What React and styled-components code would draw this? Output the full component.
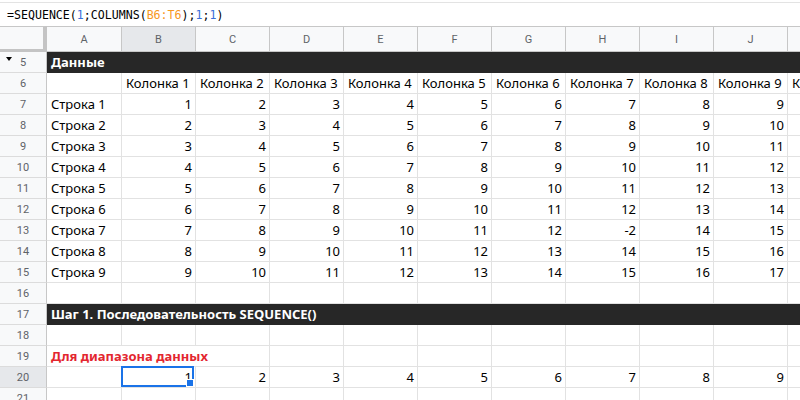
import React from 'react';
import styled, { createGlobalStyle } from 'styled-components';

const GlobalStyle = createGlobalStyle`
  html, body { margin: 0; padding: 0; background: #fff; overflow: hidden; }
  body { font-family: "Noto Sans", "Open Sans", sans-serif; }
`;

const Page = styled.div`
  width: 800px;
  height: 400px;
  overflow: hidden;
`;

const FormulaBar = styled.div`
  height: 26px;
  box-sizing: border-box;
  padding-top: 2px;
`;

const FormulaInput = styled.div`
  height: 24px;
  box-sizing: border-box;
  border-top: 1px solid #e3e3e3;
  display: flex;
  align-items: center;
  padding: 1px 0 0 7px;
  font-family: "DejaVu Sans Mono", "Liberation Mono", monospace;
  font-size: 11.6px;
  color: #000;
  white-space: pre;
`;

const Tok = styled.span`
  color: ${p => p.$c || '#000'};
`;

const Grid = styled.div`
  display: grid;
  grid-template-columns: 47px 75px repeat(10, 74px);
  grid-template-rows: 26px;
  grid-auto-rows: 21px;
  width: max-content;
`;

const Corner = styled.div`
  box-sizing: border-box;
  background: #f8f9fa;
  border-top: 1px solid #c7c7c7;
  border-right: 4px solid #c4c4c4;
  border-bottom: 3px solid #c4c4c4;
`;

const ColHeader = styled.div`
  box-sizing: border-box;
  background: ${p => (p.$active ? '#e6e8eb' : '#f8f9fa')};
  border-top: 1px solid #c7c7c7;
  border-right: 1px solid #c7c7c7;
  border-bottom: 1px solid #c7c7c7;
  display: flex;
  align-items: center;
  justify-content: center;
  padding-top: 1px;
  font-family: Roboto, "Noto Sans", sans-serif;
  font-size: 11px;
  color: #5f6368;
`;

const RowHeader = styled.div`
  position: relative;
  box-sizing: border-box;
  background: ${p => (p.$active ? '#e6e8eb' : '#f8f9fa')};
  border-right: 1px solid #c7c7c7;
  border-bottom: 1px solid #dcdcdc;
  display: flex;
  align-items: center;
  justify-content: center;
  font-family: Roboto, "Noto Sans", sans-serif;
  font-size: 11px;
  color: #5f6368;
`;

const Toggle = styled.svg`
  position: absolute;
  left: 6px;
  top: 5px;
`;

const Cell = styled.div`
  position: relative;
  box-sizing: border-box;
  border-right: 1px solid #e2e2e2;
  border-bottom: 1px solid #e2e2e2;
  padding: 0 3px 0 4px;
  font-size: 13px;
  line-height: 20px;
  white-space: nowrap;
  overflow: ${p => (p.$selected ? 'visible' : 'hidden')};
  text-align: ${p => p.$align || 'left'};
  color: ${p => p.$color || '#000'};
  font-weight: ${p => (p.$bold ? 700 : 400)};
  grid-column: ${p => (p.$span ? `span ${p.$span}` : 'auto')};
`;

const Band = styled.div`
  grid-column: 2 / -1;
  box-sizing: border-box;
  background: #272727;
  color: #fff;
  font-weight: 700;
  font-size: 13px;
  line-height: 21px;
  padding-left: 4px;
  white-space: nowrap;
  overflow: hidden;
`;

const Selection = styled.div`
  position: absolute;
  top: -1px;
  left: -1px;
  right: 1px;
  bottom: 0;
  border: 2px solid #1a73e8;
  pointer-events: none;
`;

const Handle = styled.div`
  position: absolute;
  right: -2px;
  bottom: -2px;
  width: 6px;
  height: 6px;
  background: #1a73e8;
  border: 1px solid #fff;
`;

const COLS = ['A', 'B', 'C', 'D', 'E', 'F', 'G', 'H', 'I', 'J', 'K'];

function numberRow(n) {
  return Array.from({ length: 10 }, (_, j) => {
    if (n === 7 && j === 6) return -2;
    return n + j;
  });
}

function Row({ num, active, toggle, children }) {
  return (
    <>
      <RowHeader $active={active}>
        {toggle && (
          <Toggle width="6" height="5" viewBox="0 0 6 5">
            <polygon points="0,0 6,0 3,4" fill="#000" />
          </Toggle>
        )}
        {num}
      </RowHeader>
      {children}
    </>
  );
}

function EmptyCells({ count = 11 }) {
  return Array.from({ length: count }, (_, i) => <Cell key={i} />);
}

export default function App() {
  const dataRows = Array.from({ length: 9 }, (_, i) => i + 1);
  return (
    <Page>
      <GlobalStyle />
      <FormulaBar>
        <FormulaInput>
          <Tok>=SEQUENCE(</Tok>
          <Tok $c="#3a6fd8">1</Tok>
          <Tok>;COLUMNS(</Tok>
          <Tok $c="#f7981d">B6:T6</Tok>
          <Tok>);</Tok>
          <Tok $c="#3a6fd8">1</Tok>
          <Tok>;</Tok>
          <Tok $c="#3a6fd8">1</Tok>
          <Tok>)</Tok>
        </FormulaInput>
      </FormulaBar>
      <Grid>
        <Corner />
        {COLS.map(c => (
          <ColHeader key={c} $active={c === 'B'}>{c}</ColHeader>
        ))}

        <Row num={5} toggle>
          <Band>Данные</Band>
        </Row>

        <Row num={6}>
          <Cell />
          {Array.from({ length: 10 }, (_, j) => (
            <Cell key={j}>Колонка {j + 1}</Cell>
          ))}
        </Row>

        {dataRows.map(n => (
          <Row key={n} num={n + 6}>
            <Cell>Строка {n}</Cell>
            {numberRow(n).map((v, j) => (
              <Cell key={j} $align="right">{v}</Cell>
            ))}
          </Row>
        ))}

        <Row num={16}>
          <EmptyCells />
        </Row>

        <Row num={17}>
          <Band>Шаг 1. Последовательность SEQUENCE()</Band>
        </Row>

        <Row num={18}>
          <EmptyCells />
        </Row>

        <Row num={19}>
          <Cell $span={3} $bold $color="#e3262f">Для диапазона данных</Cell>
          <EmptyCells count={8} />
        </Row>

        <Row num={20} active>
          <Cell />
          {Array.from({ length: 10 }, (_, j) => (
            <Cell key={j} $align="right" $selected={j === 0}>
              {j + 1}
              {j === 0 && (
                <Selection>
                  <Handle />
                </Selection>
              )}
            </Cell>
          ))}
        </Row>

        <Row num={21}>
          <EmptyCells />
        </Row>
      </Grid>
    </Page>
  );
}
